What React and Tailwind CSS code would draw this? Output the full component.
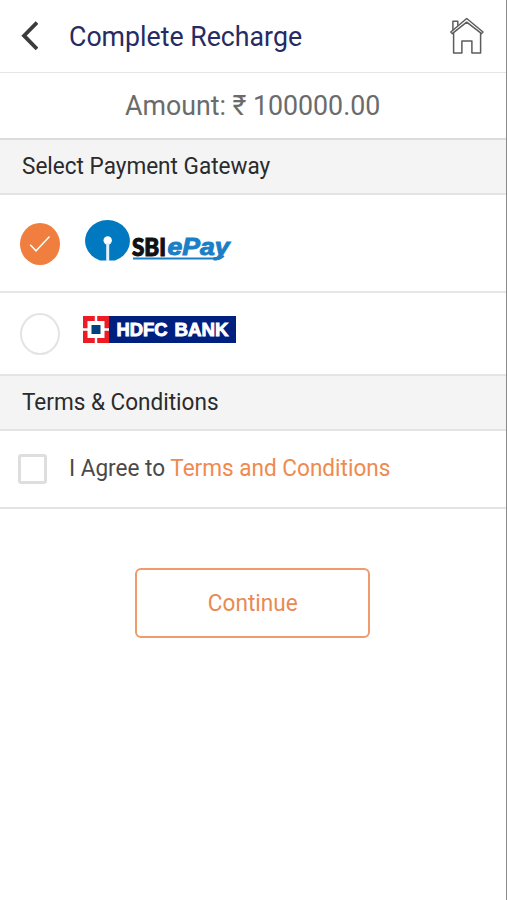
import React, { useState } from "react";

const BackIcon = () => (
  <svg width="18" height="30" viewBox="0 0 18 30" fill="none">
    <path d="M17 1.5 L4 14.7 L17 28" stroke="#3c3c3c" strokeWidth="3.8" />
  </svg>
);

const HomeIcon = () => (
  <svg width="36" height="38" viewBox="0 0 36 38" fill="none">
    <g stroke="#5c5c5c" strokeWidth="1.5" strokeLinejoin="round">
      <path d="M1.8 15 L17.7 1.5 L34 15 L32.6 16.6 L17.7 5.2 L3.2 16.6 Z" />
      <path d="M3.9 13 V4.2 H8.8 V8.7" />
      <path d="M4.6 16 V36 H12.9 V24 H22.9 V36 H31.6 V16" />
    </g>
  </svg>
);

const SbiLogo = () => (
  <svg width="150" height="44" viewBox="0 0 150 44">
    <path d="M17 40.5 A22.4 20.8 0 1 1 32 40.5 Z" fill="#0079c1" />
    <circle cx="24.7" cy="20.5" r="4.2" fill="#fff" />
    <rect x="23.2" y="23" width="3" height="18" fill="#e4f1f9" />
    <text
      x="49"
      y="35.5"
      textLength="34"
      lengthAdjust="spacingAndGlyphs"
      fontFamily="Lato, sans-serif"
      fontWeight="900"
      fontSize="25.5"
      fill="#111"
      stroke="#111"
      strokeWidth="1.1"
    >
      SBI
    </text>
    <text
      x="84.5"
      y="35"
      textLength="62"
      lengthAdjust="spacingAndGlyphs"
      fontFamily="Liberation Sans, sans-serif"
      fontWeight="700"
      fontStyle="italic"
      fontSize="24"
      fill="#1a7fc6"
      stroke="#1a7fc6"
      strokeWidth="1"
    >
      ePay
    </text>
    <path d="M50 38.5 H137 L141 36" stroke="#1a7fc6" strokeWidth="2" fill="none" />
  </svg>
);

const HdfcLogo = () => (
  <svg width="153" height="27" viewBox="0 0 153 27">
    <rect x="25" width="128" height="27" fill="#00207f" />
    <rect width="26" height="27" fill="#ed1c24" />
    <rect x="4.5" y="5" width="17" height="17" fill="#fff" />
    <path d="M13 0 V27 M0 13.5 H26" stroke="#fff" strokeWidth="2.4" />
    <rect x="8.5" y="9" width="9" height="9" fill="#00407f" />
    <text
      x="33.5"
      y="20.3"
      textLength="51"
      lengthAdjust="spacingAndGlyphs"
      fontFamily="Liberation Sans, sans-serif"
      fontWeight="700"
      fontSize="17.5"
      fill="#fff"
      stroke="#fff"
      strokeWidth="0.9"
    >
      HDFC
    </text>
    <text
      x="91.5"
      y="20.3"
      textLength="54"
      lengthAdjust="spacingAndGlyphs"
      fontFamily="Liberation Sans, sans-serif"
      fontWeight="700"
      fontSize="17.5"
      fill="#fff"
      stroke="#fff"
      strokeWidth="0.9"
    >
      BANK
    </text>
  </svg>
);

const Radio = ({ checked, onClick }) => (
  <button
    onClick={onClick}
    className={
      checked
        ? "w-10 h-[42px] rounded-[50%] bg-[#ef7e3f] flex items-center justify-center"
        : "w-10 h-[42px] rounded-[50%] border-2 border-[#e3e3e3] bg-white"
    }
  >
    {checked && (
      <svg width="22" height="18" viewBox="0 0 22 18" fill="none">
        <path d="M1.2 9.8 L7 15.8 L20.5 1.5" stroke="#fff" strokeWidth="1.5" />
      </svg>
    )}
  </button>
);

const SectionTitle = ({ children }) => (
  <h2 className="h-[55px] pl-[21.5px] flex items-center bg-[#f4f4f4] border-b-2 border-[#e4e4e4] text-[23px] text-[#2b2b2b]">
    <span className="inline-block origin-left scale-x-[0.98] pt-0.5">{children}</span>
  </h2>
);

const App = () => {
  const [gateway, setGateway] = useState("sbi");
  const [agree, setAgree] = useState(false);

  return (
    <div className="min-h-screen bg-white border-r border-[#8a8a8a] font-['Roboto',sans-serif]">
      <header className="h-[73px] flex items-center pl-5 pr-[21px] border-b border-[#e6e6e6]">
        <button>
          <BackIcon />
        </button>
        <h1 className="ml-[31px] flex-1 text-[28px] text-[#262b63]">
          <span className="inline-block origin-left scale-x-[0.954] pt-0.5">Complete Recharge</span>
        </h1>
        <button>
          <HomeIcon />
        </button>
      </header>

      <div className="h-[67px] flex items-center justify-center border-b-2 border-[#dcdcdc] text-[28px] text-[#6b6b6b]">
        <span className="inline-block scale-x-[0.955]">Amount: ₹ 100000.00</span>
      </div>

      <SectionTitle>Select Payment Gateway</SectionTitle>

      <div className="h-[98px] flex items-center pl-5 pt-0.5 border-b-2 border-[#e6e6e6]">
        <Radio checked={gateway === "sbi"} onClick={() => setGateway("sbi")} />
        <div className="ml-[23px] -mt-1">
          <SbiLogo />
        </div>
      </div>
      <div className="h-[83px] flex items-center pl-5 border-b-2 border-[#e4e4e4]">
        <Radio checked={gateway === "hdfc"} onClick={() => setGateway("hdfc")} />
        <div className="ml-[23px] -mt-2">
          <HdfcLogo />
        </div>
      </div>

      <SectionTitle>Terms &amp; Conditions</SectionTitle>

      <div className="h-[78px] flex items-center pl-[18px] border-b-2 border-[#e4e4e4]">
        <button
          onClick={() => setAgree(!agree)}
          className="w-[29px] h-[30px] border-[3px] border-[#dedede] rounded-[3px]"
        >
          {agree && "✓"}
        </button>
        <p className="ml-[22px] text-[23px] text-[#4a4a4a] origin-left scale-x-[0.981]">
          I Agree to <a className="text-[#ef8a50]">Terms and Conditions</a>
        </p>
      </div>

      <button className="block w-[235px] h-[70px] mt-[59px] ml-[135px] border-2 border-[#ef9b6b] rounded-md text-[23px] text-[#e88a55]">
        <span className="inline-block scale-x-[0.981] pt-0.5">Continue</span>
      </button>
    </div>
  );
};

export default App;
